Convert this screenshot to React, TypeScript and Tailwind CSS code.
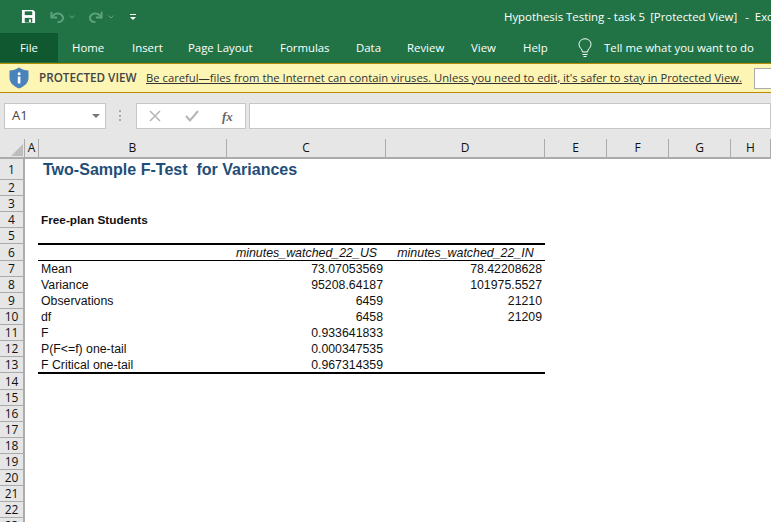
const ui = "font-['Open_Sans','Noto_Sans',sans-serif]";

const tabs = [
  { label: "Home", w: "w-[60px]" },
  { label: "Insert", w: "w-[56px]" },
  { label: "Page Layout", w: "w-[92px]" },
  { label: "Formulas", w: "w-[76px]" },
  { label: "Data", w: "w-[51px]" },
  { label: "Review", w: "w-[64px]" },
  { label: "View", w: "w-[52px]" },
  { label: "Help", w: "w-[55px]" },
];

const columns = ["A", "B", "C", "D", "E", "F", "G", "H"];

const rows = [
  { n: 1, h: "h-[21px]" },
  { n: 2 },
  { n: 3 },
  { n: 4 },
  { n: 5 },
  { n: 6, h: "h-[17px]", b: "Header" },
  { n: 7, b: "Mean", c: "73.07053569", d: "78.42208628" },
  { n: 8, b: "Variance", c: "95208.64187", d: "101975.5527" },
  { n: 9, b: "Observations", c: "6459", d: "21210" },
  { n: 10, b: "df", c: "6458", d: "21209" },
  { n: 11, b: "F", c: "0.933641833" },
  { n: 12, b: "P(F<=f) one-tail", c: "0.000347535" },
  { n: 13, b: "F Critical one-tail", c: "0.967314359" },
  { n: 14, h: "h-[17px]" },
  ...Array.from({ length: 9 }, (_, i) => ({ n: 15 + i })),
] as { n: number; h?: string; b?: string; c?: string; d?: string }[];

const gridCols = "grid grid-rows-[minmax(0,1fr)] grid-cols-[25px_14px_188px_159px_159px_62px_62px_62px_40px]";

const SaveIcon = () => (
  <svg width="15" height="15" viewBox="0 0 16 16">
    <path d="M1 1h12l2 2v12H1z" fill="#fff" />
    <rect x="4" y="2.5" width="8" height="4" fill="#217346" />
    <rect x="4" y="9.5" width="8" height="5" fill="#217346" />
    <rect x="8.5" y="11" width="2" height="3" fill="#fff" />
  </svg>
);

const UndoIcon = ({ flip }: { flip?: boolean }) => (
  <svg width="15" height="14" viewBox="0 0 16 14" className={flip ? "-scale-x-100" : ""}>
    <path
      d="M2 6.5 C6 2 11 2 14 7 C14 11 11 12.5 8 12.5"
      fill="none"
      stroke="#5fa37f"
      strokeWidth="2"
    />
    <path d="M1.5 1.5v6h6" fill="none" stroke="#5fa37f" strokeWidth="2" />
  </svg>
);

const Caret = () => (
  <svg width="6" height="4" viewBox="0 0 6 4">
    <path d="M0.5 0.5 3 3 5.5 0.5" fill="none" stroke="#5fa37f" />
  </svg>
);

const Shield = () => (
  <svg width="20" height="22" viewBox="0 0 20 22">
    <path d="M10 0.5 C13 2.5 16 3.5 19.5 3.5 V11 C19.5 16 15 19.5 10 21.5 C5 19.5 0.5 16 0.5 11 V3.5 C4 3.5 7 2.5 10 0.5Z" fill="#4a82bb" />
    <rect x="8.8" y="5.5" width="2.6" height="2.6" fill="#fff" />
    <rect x="8.8" y="9.5" width="2.6" height="7" fill="#fff" />
  </svg>
);

const Bulb = () => (
  <svg width="14" height="20" viewBox="0 0 14 20" fill="none" stroke="#fff" strokeWidth="1">
    <path d="M4.5 14 C4.5 11 1 10 1 6.5 C1 3 3.8 0.8 7 0.8 C10.2 0.8 13 3 13 6.5 C13 10 9.5 11 9.5 14 Z" />
    <path d="M4.5 16.5h5M5.5 18.5h3" />
  </svg>
);

export default function App() {
  return (
    <div className={`w-[771px] h-[522px] overflow-hidden bg-white ${ui}`}>
      {/* title bar */}
      <div className="h-[33px] bg-[#217346] flex items-center text-white text-[11.4px] whitespace-nowrap">
        <div className="ml-[21px] flex items-center"><SaveIcon /></div>
        <div className="ml-[14px] flex items-center gap-[4px]"><UndoIcon /><Caret /></div>
        <div className="ml-[13px] flex items-center gap-[5px]"><UndoIcon flip /><Caret /></div>
        <div className="ml-[16px] flex flex-col items-center gap-[2px]">
          <div className="w-[6px] h-px bg-white" />
          <div className="w-0 h-0 border-x-[3px] border-t-[3px] border-x-transparent border-t-white" />
        </div>
        <div className="ml-[368px] flex">
          <span>Hypothesis Testing - task 5</span>
          <span className="ml-[5px]">[Protected View]</span>
          <span className="ml-[8px]">-</span>
          <span className="ml-[6px]">Excel</span>
        </div>
      </div>

      {/* ribbon tabs */}
      <div className="h-[30px] bg-[#217346] flex text-white text-[11.4px] whitespace-nowrap">
        <div className="w-[58px] h-[29px] bg-[#10582f] flex items-center justify-center">File</div>
        <div className="flex items-center pl-[14px]">
          {tabs.map((t) => (
            <div key={t.label} className={t.w}>{t.label}</div>
          ))}
          <Bulb />
          <div className="ml-[12px]">Tell me what you want to do</div>
        </div>
      </div>

      {/* protected view bar */}
      <div className="h-[30px] bg-[#fdf5b4] border-y border-[#b88a00] flex items-center text-[11.25px] text-[#333] whitespace-nowrap">
        <div className="ml-[9px] flex"><Shield /></div>
        <div className="ml-[10px] w-[97px] font-semibold text-[11.7px] text-[#444]">PROTECTED VIEW</div>
        <div className="ml-[10px] w-[596px] shrink-0 underline">Be careful—files from the Internet can contain viruses. Unless you need to edit, it's safer to stay in Protected View.</div>
        <div className="ml-[12px] w-[30px] h-[21px] shrink-0 bg-white border border-[#ababab]" />
      </div>

      {/* formula bar */}
      <div className="h-[46px] bg-[#e6e6e6] flex items-start pt-[10px]">
        <div className="ml-[4px] w-[102px] h-[26px] bg-white border border-[#c6c6c6] flex items-center justify-between pl-[7px] pr-[5px] text-[13px] text-[#444]">
          A1
          <div className="w-0 h-0 border-x-[4px] border-t-[4px] border-x-transparent border-t-[#777]" />
        </div>
        <div className="ml-[13px] w-[3px] h-[11px] mt-[7px] border-l-2 border-dotted border-[#aaa]" />
        <div className="ml-[14px] w-[110px] h-[26px] bg-white border border-[#c6c6c6] flex items-center text-[#b0b0b0]">
          <svg width="12" height="12" viewBox="0 0 12 12" className="ml-[12px]">
            <path d="M1 1 11 11M11 1 1 11" stroke="#b5b5b5" strokeWidth="1.5" />
          </svg>
          <svg width="14" height="12" viewBox="0 0 14 12" className="ml-[24px]">
            <path d="M1 6 5 10.5 13 1" fill="none" stroke="#b5b5b5" strokeWidth="2" />
          </svg>
          <span className="ml-[23px] text-[#666] italic font-bold text-[13px] font-['Liberation_Serif',serif] leading-none">fx</span>
        </div>
        <div className="ml-[3px] flex-1 h-[26px] bg-white border border-[#c6c6c6]" />
      </div>

      {/* sheet */}
      <div className="font-['Liberation_Sans',Arial,sans-serif] text-[12.3px] text-[#111]">
        <div className={`${gridCols} h-[20px] bg-[#e6e6e6] border-b-2 border-[#ababab] font-['Open_Sans',sans-serif] text-[12px] leading-[16px]`}>
          <div className="border-r border-[#ababab] flex items-end justify-end pr-[1px] pb-[1px]">
            <div className="w-0 h-0 border-l-[12px] border-b-[12px] border-l-transparent border-b-[#bdbdbd]" />
          </div>
          {columns.map((c) => (
            <div key={c} className="border-r border-[#ababab] flex items-center justify-center">{c}</div>
          ))}
        </div>
        {rows.map((r) => {
          const isHeader = r.n === 6;
          const isLast = r.n === 13;
          const cell = isLast ? "border-b-2 border-black -mb-px pt-[1px] leading-[14px]" : "leading-[16px]";
          return (
            <div key={r.n} className={`${gridCols} ${r.h ?? "h-[16px]"}`}>
              <div className="bg-[#e6e6e6] border-r-2 border-b border-[#ababab] flex items-center justify-center font-['Open_Sans',sans-serif] text-[12px] leading-[15px]">{r.n}</div>
              <div />
              {r.n === 1 ? (
                <div className="col-span-3 pl-[4px] pt-[1px] font-bold text-[16.05px] leading-[19px] text-[#1f4e79] whitespace-pre">Two-Sample F-Test  for Variances</div>
              ) : r.n === 4 ? (
                <div className="pl-[2px] font-bold text-[11.8px] leading-[16px]">Free-plan Students</div>
              ) : isHeader ? (
                <>
                  <div className="border-t-2 border-b border-black -ml-px -mt-px" />
                  <div className="border-t-2 border-b border-black -mt-px pt-[1px] italic text-[12.4px] text-center leading-[14px]">minutes_watched_22_US</div>
                  <div className="border-t-2 border-b border-black -mt-px pt-[1px] italic text-[12.4px] text-center leading-[14px]">minutes_watched_22_IN</div>
                </>
              ) : r.b ? (
                <>
                  <div className={`pl-[3px] -ml-px whitespace-nowrap ${cell}`}>{r.b}</div>
                  <div className={`pr-[3px] text-right ${cell}`}>{r.c}</div>
                  <div className={`pr-[3px] text-right ${cell}`}>{r.d}</div>
                </>
              ) : null}
            </div>
          );
        })}
      </div>
    </div>
  );
}
